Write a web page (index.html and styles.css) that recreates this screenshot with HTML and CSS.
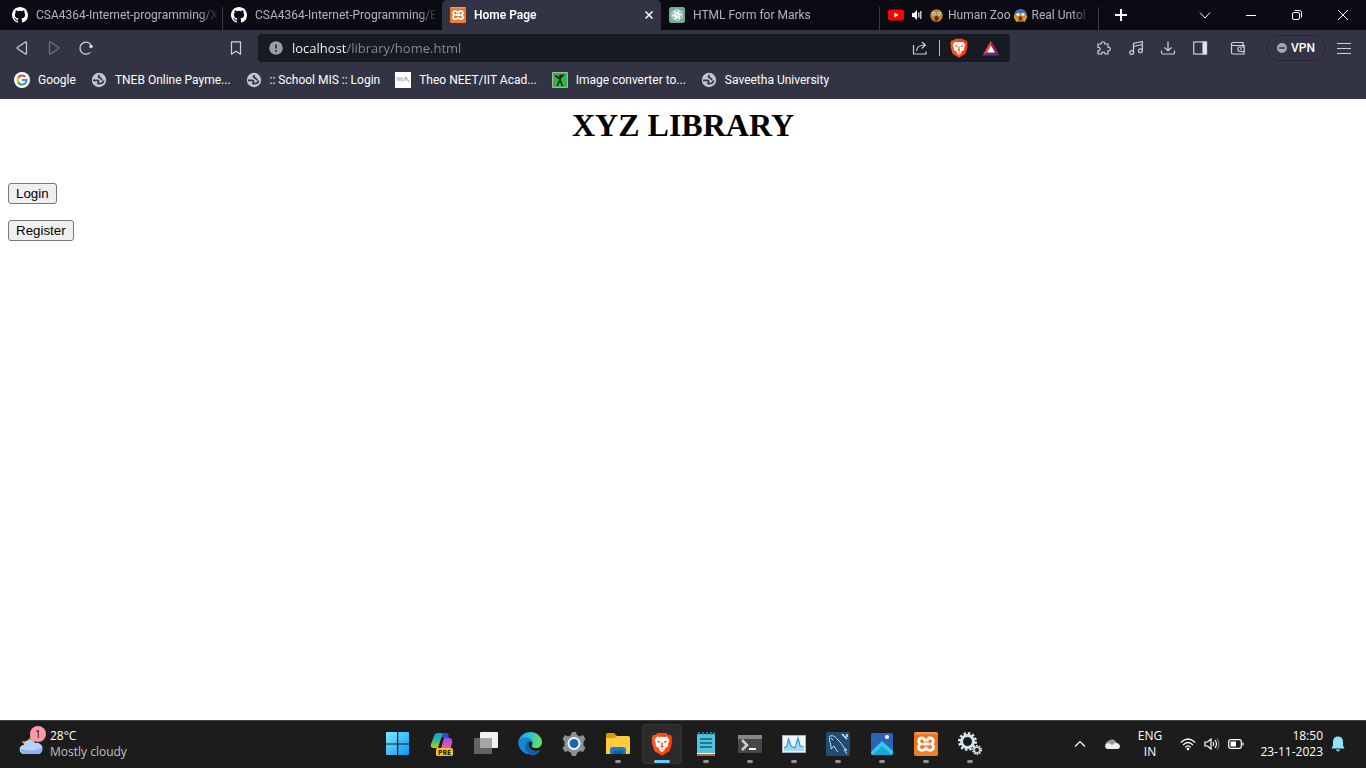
FILE: index.html
```html
<!DOCTYPE html>
<html lang="en">
<head>
<meta charset="utf-8">
<title>Home Page</title>
<link rel="stylesheet" href="styles.css">
</head>
<body>
<svg class="defs" aria-hidden="true">
  <defs>
    <linearGradient id="xo" x1="0" y1="0" x2="0" y2="1"><stop offset="0" stop-color="#f9a566"/><stop offset=".15" stop-color="#ee6d17"/><stop offset="1" stop-color="#f47f2a"/></linearGradient>
    <linearGradient id="win" x1="0" y1="0" x2="1" y2="1"><stop offset="0" stop-color="#7deaff"/><stop offset="1" stop-color="#0a94f5"/></linearGradient>
    <linearGradient id="brv" x1="0" y1="0" x2="1" y2="0"><stop offset="0" stop-color="#ff5a22"/><stop offset="1" stop-color="#ff3a00"/></linearGradient>
    <symbol id="github" viewBox="0 0 16 16"><path fill="#fff" d="M8 0C3.58 0 0 3.58 0 8c0 3.54 2.29 6.53 5.47 7.59.4.07.55-.17.55-.38 0-.19-.01-.82-.01-1.49-2.01.37-2.53-.49-2.69-.94-.09-.23-.48-.94-.82-1.13-.28-.15-.68-.52-.01-.53.63-.01 1.08.58 1.23.82.72 1.21 1.87.87 2.33.66.07-.52.28-.87.51-1.07-1.78-.2-3.64-.89-3.64-3.95 0-.87.31-1.59.82-2.15-.08-.2-.36-1.02.08-2.12 0 0 .67-.21 2.2.82a7.6 7.6 0 0 1 4 0c1.53-1.04 2.2-.82 2.2-.82.44 1.1.16 1.92.08 2.12.51.56.82 1.27.82 2.15 0 3.07-1.87 3.75-3.65 3.95.29.25.54.73.54 1.48 0 1.07-.01 1.93-.01 2.2 0 .21.15.46.55.38A8.01 8.01 0 0 0 16 8c0-4.42-3.58-8-8-8z"/></symbol>
    <symbol id="xampp" viewBox="0 0 24 24"><rect width="24" height="24" rx="2" fill="url(#xo)"/><path d="M8.500 12h7M10.500 9.500C11 7 10 6 8 6S4.700 7.400 4.700 9c0 1.500.8 2.600 2.100 3-1.300.5-2.300 1.600-2.300 3.100 0 1.800 1.300 3.200 3.300 3.200 2.200 0 3.600-1.200 4.200-2.300.6 1.100 2 2.300 4.200 2.300 2 0 3.300-1.400 3.300-3.200 0-1.500-1-2.600-2.300-3.100 1.300-.4 2.100-1.500 2.100-3C19.300 7.400 18 6 16 6s-3 1-2.500 3.500" fill="none" stroke="#fff" stroke-width="2.800" stroke-linejoin="round"/></symbol>
    <symbol id="globe" viewBox="0 0 16 16"><circle cx="8" cy="8" r="7.200" fill="#c3c6cd"/><path d="M2 8.300h4c2 0 2 1.300 1.200 2-.9.700-.3 1.300.3 1.400 3 .2 4.800-1.700 5.200-3.200M8.800 3.400c-1.600.4-1.800 1.900-.3 2.200 1.800.3 1.300 2.200 3 2.400" fill="none" stroke="#323443" stroke-width="1.700"/></symbol>
    <symbol id="brave" viewBox="0 0 22 24"><path fill="url(#brv)" d="M6.500 1h9l1.800 2 2.200-.2L21.500 6l-.7 2 .3 3-2.500 8L11 23.700 3.400 19 .9 11l.3-3-.7-2 2-3.200 2.200.2z"/><path fill="#fff" d="M6 4.500l2.500.6L11 4.700l2.500.4 2.500-.6L18.500 8 17 12l.4 2-3 2-1.200 2.500L11 20.300l-2.200-1.800L7.600 16l-3-2 .4-2L3.500 8z"/><path fill="#fb4515" d="M6 8.800l3.300.6-.6 1.400-2-.5zM16 8.800l-3.300.6.6 1.400 2-.5zM10.200 10.500h1.600l-.2 3.300 1.100 1-1.700 1-1.700-1 1.100-1zM9 17l2 .7 2-.7-2 1.800z"/></symbol>
  </defs>
</svg>
<div class="screen">
  <header class="browser">
    <div class="tabstrip">
      <div class="tabs" role="tablist">
        <button class="tab sep" role="tab"><svg class="fav"><use href="#github"/></svg><span class="title">CSA4364-Internet-programming/X</span></button>
        <button class="tab" role="tab"><svg class="fav"><use href="#github"/></svg><span class="title">CSA4364-Internet-Programming/E</span></button>
        <button class="tab active" role="tab" aria-selected="true"><svg class="fav"><use href="#xampp"/></svg><span class="title">Home Page</span><svg class="tabclose" viewBox="0 0 8 8"><path d="M.5.5l7 7M7.500.5l-7 7"/></svg></button>
        <button class="tab sep" role="tab"><svg class="fav" viewBox="0 0 16 16"><rect width="16" height="16" rx="2.500" fill="#75a99c"/><g fill="none" stroke="#fff" stroke-width=".8"><path id="pt" d="M5.300 9.600V5c0-3 4.300-3.200 5-.6L6.800 6.400v3.300"/><use href="#pt" transform="rotate(60 8 8)"/><use href="#pt" transform="rotate(120 8 8)"/><use href="#pt" transform="rotate(180 8 8)"/><use href="#pt" transform="rotate(240 8 8)"/><use href="#pt" transform="rotate(300 8 8)"/></g></svg><span class="title">HTML Form for Marks</span></button>
        <button class="tab sep media" role="tab">
          <svg class="fav" viewBox="0 0 16 16"><rect y="2.500" width="16" height="11" rx="2.500" fill="#f00"/><path d="M6.300 5.600v4.800l4.200-2.400z" fill="#fff"/></svg>
          <svg class="sound" viewBox="0 0 12 12"><path d="M1 4h2l3-3v10L3 8H1z" fill="#fff"/><path d="M7.800 3.500v5M9.800 2v8" stroke="#fff" stroke-width="1.100"/></svg>
          <span class="title"><svg class="emoji" viewBox="0 0 12 12"><circle cx="6" cy="6" r="5.800" fill="#b58a2a"/><circle cx="3.600" cy="4.200" r="1.700" fill="#e2e0d8"/><circle cx="8.400" cy="4.200" r="1.700" fill="#e2e0d8"/><circle cx="3.700" cy="4.200" r=".7" fill="#432"/><circle cx="8.300" cy="4.200" r=".7" fill="#432"/><ellipse cx="6" cy="8.700" rx="1.900" ry="2.300" fill="#7c1a2b"/></svg> Human Zoo <svg class="emoji" viewBox="0 0 12 12"><circle cx="6" cy="6" r="5.800" fill="#c38b28"/><path d="M.3 5A5.800 5.800 0 0 1 11.700 5Q6 2 .3 5" fill="#3973c4"/><circle cx="3.700" cy="5" r="1.500" fill="#e8e8e8"/><circle cx="8.300" cy="5" r="1.500" fill="#e8e8e8"/><ellipse cx="6" cy="8.800" rx="1.600" ry="2.200" fill="#802038"/><path d="M.5 6.500l2.500 5M11.500 6.500L9 11.500" stroke="#e19a29" stroke-width="2"/></svg> Real Untol</span></button>
      </div>
      <button class="newtab" aria-label="New tab"><svg viewBox="0 0 12 12" width="12" height="12"><path d="M6 0v12M0 6h12" stroke="#fff" stroke-width="2"/></svg></button>
      <div class="winctl">
        <button aria-label="Search tabs"><svg viewBox="0 0 12 12"><path d="M1 3.500l5 5.500 5-5.500"/></svg></button>
        <button aria-label="Minimize"><svg viewBox="0 0 12 12"><path d="M1 6.500h10"/></svg></button>
        <button aria-label="Restore"><svg viewBox="0 0 12 12"><rect x="1.500" y="3.500" width="7" height="7" rx="1.500"/><path d="M3.500 1.500h5a2 2 0 0 1 2 2v5"/></svg></button>
        <button aria-label="Close"><svg viewBox="0 0 12 12"><path d="M1 1l10 10M11 1L1 11"/></svg></button>
      </div>
    </div>
    <div class="toolbar">
      <div class="nav">
        <button aria-label="Back"><svg viewBox="0 0 16 16"><path d="M12.500 2.500v11c0 .6-.6.8-1 .5L3.300 8.500q-.5-.5 0-1L11.500 2q1-.5 1 .5z"/></svg></button>
        <button class="dim" aria-label="Forward"><svg viewBox="0 0 16 16"><path d="M3.500 2.500v11c0 .6.600.8 1 .5l8.200-5.500q.5-.5 0-1L4.500 2q-1-.5-1 .5z"/></svg></button>
        <button aria-label="Reload"><svg viewBox="0 0 16 16"><path d="M12.300 12.300A6 6 0 1 1 13.600 6"/><circle cx="13" cy="6.500" r="1.200" fill="#fff"/></svg></button>
      </div>
      <button class="save" aria-label="Bookmark"><svg viewBox="0 0 16 16"><path d="M3.500 1.800h9v12.400l-4.500-3-4.500 3z"/></svg></button>
      <div class="address">
        <svg class="info" viewBox="0 0 14 14"><circle cx="7" cy="7" r="6.800" fill="#9a9da8"/><path d="M7 3.500v4M7 9v1.800" stroke="#22252e" stroke-width="1.600"/></svg>
        <input class="url" type="text" aria-label="Address" value="localhost/library/home.html">
        <button aria-label="Share"><svg viewBox="0 0 16 16" class="share"><path d="M1.500 5v9h12.500v-2.500M4.500 11c.3-4 2.500-6 8.500-6M9.800 2l3.600 3-3.600 3.500"/></svg></button>
        <span class="bar"></span>
        <button aria-label="Brave Shields"><svg class="lion"><use href="#brave"/></svg></button>
        <button aria-label="Rewards"><svg class="bat" viewBox="0 0 18 16"><path d="M9 .5L.5 15.500 6 12l3-6z" fill="#ff4724"/><path d="M9 .5l8.500 15L12 12 9 6z" fill="#9e1f63"/><path d="M.5 15.500h17L12 12H6z" fill="#662d91"/><path d="M9 5.500L5 12.500h8z" fill="#fff"/></svg></button>
      </div>
      <div class="actions">
        <button aria-label="Extensions"><svg viewBox="0 0 16 16"><path d="M2 4h3.200C4.500 1 9.500 1 8.800 4H12v3.200c3-.7 3 4.300 0 3.600V14H9c.4-2.600-3.800-2.600-3.500 0H2v-3.200c2.700.6 2.700-4 0-3.500z"/></svg></button>
        <button aria-label="Media"><svg viewBox="0 0 16 16"><path d="M5.500 12.500V3.500L14.300 1.500v9M5.500 6.500l8.800-2"/><circle cx="3.700" cy="12.500" r="1.900"/><circle cx="12.400" cy="10.800" r="1.900"/></svg></button>
        <button aria-label="Downloads"><svg viewBox="0 0 16 16"><path d="M8 1.500v9M4.500 7.500L8 10.800l3.500-3.300M1.500 10.500v2q0 1.500 1.500 1.500h10q1.500 0 1.500-1.500v-2"/></svg></button>
        <button aria-label="Sidebar"><svg viewBox="0 0 16 16"><rect x="1.700" y="2" width="12.800" height="12"/><path d="M11 2h3.500v12H11z" fill="#e8e8ee"/></svg></button>
        <button class="wallet" aria-label="Wallet"><svg viewBox="0 0 16 16"><path d="M13 5V2.500H3.500q-2 0-2 1.500v8.500q0 1.500 1.500 1.500h11v-2.500M1.700 5.500h12.500v6H10q-2.200-.3-2.200-2.500T10 7h4.200"/><circle cx="10.800" cy="9.200" r=".3"/></svg></button>
        <button class="vpn"><svg viewBox="0 0 10 10" class="vpnico"><circle cx="5" cy="5" r="5" fill="#a3a6c0"/><path d="M2 5h6" stroke="#323443" stroke-width="1.500"/></svg>VPN</button>
        <button aria-label="Menu"><svg viewBox="0 0 16 16"><path d="M1 3.500h14M1 8.500h14M1 13.500h14"/></svg></button>
      </div>
    </div>
    <nav class="bookmarks" aria-label="Bookmarks">
      <a href="#"><svg class="fav" viewBox="0 0 16 16"><circle cx="8" cy="8" r="8" fill="#fff"/><g fill="none" stroke-width="2"><path stroke="#ea4335" d="M4 6a4.500 4.500 0 0 1 7.300-1.200"/><path stroke="#fbbc05" d="M4 6a4.500 4.500 0 0 0 0 4"/><path stroke="#34a853" d="M4 10a4.500 4.500 0 0 0 7 1.500"/><path stroke="#4285f4" d="M11 11.500A4.500 4.500 0 0 0 12.500 8H8"/></g></svg><span>Google</span></a>
      <a href="#"><svg class="fav"><use href="#globe"/></svg><span>TNEB Online Payme...</span></a>
      <a href="#"><svg class="fav"><use href="#globe"/></svg><span>:: School MIS :: Login</span></a>
      <a href="#"><svg class="fav" viewBox="0 0 16 16"><path d="M0 0h16v16H0z" fill="#fff"/><path d="M1 6h5M2 8h4M7 5v5M9 9l2-4 3 5M9 6h3" stroke="#aaa3ad" fill="none"/><path d="M2 7h4M10 8h4" stroke="#d2b5b9" fill="none"/></svg><span>Theo NEET/IIT Acad...</span></a>
      <a href="#"><svg class="fav" viewBox="0 0 16 16"><path d="M.5.500h15v15H.5z" fill="#35b34a" stroke="#a7b5aa"/><circle cx="8.500" cy="4" r="1.400" fill="#0a2411"/><path d="M3 3.500l4.500 3 4.500-4M8 6v4M7.500 9L5 14M8.500 9l2 5" stroke="#0a2411" stroke-width="1.600" fill="none"/></svg><span>Image converter to...</span></a>
      <a href="#"><svg class="fav"><use href="#globe"/></svg><span>Saveetha University</span></a>
    </nav>
  </header>
  <main class="page">
    <h1>XYZ LIBRARY</h1>
    <button class="pagebtn">Login</button>
    <button class="pagebtn">Register</button>
  </main>
  <footer class="taskbar">
    <button class="weather">
      <span class="wicon"><svg viewBox="0 0 28 28"><path d="M13 4a7 7 0 0 1-9 9c2 6 11 6 14-1z" fill="#f4a51c"/><path d="M7 27a5 5 0 0 1-.5-10 6.500 6.500 0 0 1 12-2A6 6 0 0 1 22 27z" fill="#b9d3f8"/><path d="M3 21q11 5 23-1c0 5-1 7-5 7H7q-4-1-4-5z" fill="#8fb3f0"/></svg><span class="badge">1</span></span>
      <span class="wtext"><span>28°C</span><span class="muted">Mostly cloudy</span></span>
    </button>
    <div class="apps">
      <button aria-label="Start"><svg viewBox="0 0 24 24"><path d="M0 1q0-1 1-1h10v11.500H0zM12.300 0H22q1 0 1 1v10.500H12.300zM0 12.500h11V23H1q-1 0-1-1zM12.300 12.500H23V22q0 1-1 1h-9.700z" fill="url(#win)"/></svg></button>
      <button aria-label="Copilot"><svg viewBox="0 0 24 24"><defs><linearGradient id="cp1" x1="0" y1="0" x2="0" y2="1"><stop offset="0" stop-color="#159bd8"/><stop offset=".5" stop-color="#35b68a"/><stop offset="1" stop-color="#d6c51b"/></linearGradient><linearGradient id="cp2" x1="0" y1="0" x2="0" y2="1"><stop offset="0" stop-color="#a44cf0"/><stop offset=".6" stop-color="#ee5aa0"/><stop offset="1" stop-color="#ff8755"/></linearGradient></defs><path d="M7 1h9q2 0 2.500 3l-5 0q-2 0-3 4L8 16H3q-3-1-2-4l3-8q1-3 3-3z" fill="url(#cp1)"/><path d="M12 1h4q2 0 3 5h-6z" fill="#1757c5"/><path d="M14 6h6q3 1 2 5l-2 8q-1 4-4 4h-5q-2-1-1-3z" fill="url(#cp2)"/><rect x="6" y="16" width="17" height="8" rx="1.500" fill="#ffc20e"/><text x="14.500" y="22.500" class="pre">PRE</text></svg></button>
      <button aria-label="Task view"><svg viewBox="0 0 24 24"><rect x="6" width="18" height="16" rx="1" fill="#f1f1f1"/><rect y="6" width="18" height="16" rx="1" fill="#6c6c6c" fill-opacity=".9"/><path d="M6 6h12v10H6z" fill="#a5a5a5"/></svg></button>
      <button aria-label="Edge"><svg viewBox="0 0 24 24"><defs><linearGradient id="ed" x1="0" y1="0" x2="1" y2=".3"><stop offset="0" stop-color="#1b9de2"/><stop offset=".6" stop-color="#35c5c7"/><stop offset="1" stop-color="#65df5d"/></linearGradient></defs><path d="M.2 11C1 4 6 0 12 0c7 0 12 5 12 10 0 4-3 6-6 6-4 0-5-2-4-3 2-4-2-7-6-7-4 0-7 2-7.800 5z" fill="url(#ed)"/><path d="M.2 11C1 7 4 5.500 7.500 5.500c4 0 7 2 7 5-4-2-7 1-6 5 1 4 5 6 9 5.500A12 12 0 0 1 .2 11z" fill="#1587d8"/><path d="M11 9c-6 2-5 13 4 14.600 4-1 6-3 7.500-5.600-6 2.500-13 0-11.500-9z" fill="#125fae"/></svg></button>
      <button aria-label="Settings"><svg viewBox="0 0 24 24"><path d="M10 0h4l1 3 3 1.500 3-1.500 2.500 4-2 2.500v4l2 2.500-2.500 4-3-1-3 2-1 3h-4l-1-3-3-2-3 1-2.500-4 2-2.500v-4L.5 7 3 3l3 1.500L9 3z" fill="#88919b"/><circle cx="12" cy="11.500" r="6.500" fill="#f4f6f8"/><circle cx="12" cy="11.500" r="4.500" fill="#1767b5"/></svg></button>
      <button class="running" aria-label="File Explorer"><svg viewBox="0 0 24 24"><path d="M0 3q0-2 2-2h6l3 3v6H0z" fill="#d89b0b"/><path d="M0 6h8l3-2h11q2 0 2 2v15q0 1-1 1H0z" fill="#ffcc3f"/><path d="M4 22v-4q0-3 3-3h10q3 0 3 3v4z" fill="#147ccb"/><path d="M7 18.500h10V22H7z" fill="#0c61ad"/></svg></button>
      <button class="running current" aria-label="Brave"><svg><use href="#brave"/></svg></button>
      <button class="running" aria-label="Notepad"><svg viewBox="0 0 24 24"><path d="M3 2h18v20H3z" fill="#53c2df"/><path d="M5 0v3M9 0v3M13 0v3M17 0v3M20 0v3" stroke="#2b91b0" stroke-width="1.500"/><path d="M6 7h12M6 11h12M6 15h12" stroke="#12617e" stroke-width="1.700"/><path d="M3 21h18v1H3z" fill="#fff"/><path d="M3 22h18v2H3z" fill="#bf6725"/></svg></button>
      <button class="running" aria-label="Terminal"><svg viewBox="0 0 24 24"><rect y="3" width="24" height="18" rx="1" fill="#474747"/><path d="M0 3h24v4H0z" fill="#858585"/><path d="M4 8l5 5-5 5" stroke="#d2d2d2" stroke-width="2.500" fill="none"/><path d="M11 17h7" stroke="#fff" stroke-width="2"/></svg></button>
      <button class="running" aria-label="Performance"><svg viewBox="0 0 24 24"><path d="M.5 3.500h23v17H.5z" fill="#f1f5fa" stroke="#aab6c2"/><path d="M2 19v-3l3-2 1-6 2 1 2 6 4 1 2-9 2 3 1 6 3-1v4z" fill="#a3d7fa"/><path d="M2 16l3-2 1.500-7L9 14l4 2 3-10 2 8 4 1" fill="none" stroke="#3096df" stroke-width="1.200"/></svg></button>
      <button class="running" aria-label="MySQL Workbench"><svg viewBox="0 0 24 24"><rect width="24" height="24" rx="2" fill="#1f4d73"/><path d="M5 17c1-3-3-10-1-13 3-1 6 1 8 4 3 3 4 4 6 8l3 2-3 0 3 4M5 17l3-3c1 2 2 4 4 6M5 6l2 2" stroke="#cfe0ec" fill="none"/><path d="M16 2l5 5M21 2v3" stroke="#e5eef4" stroke-width="1.500"/></svg></button>
      <button class="running" aria-label="Photos"><svg viewBox="0 0 24 24"><rect x="1" y="1" width="22" height="22" rx="2" fill="#2d62b9"/><path d="M1 20L12 9l11 10v2q0 2-2 2H3q-2 0-2-2z" fill="#32c8eb"/><path d="M3 23l9-9 9 8-1 1z" fill="#17a7d5"/><circle cx="17" cy="5" r="2" fill="#fff"/></svg></button>
      <button class="running" aria-label="XAMPP"><svg><use href="#xampp"/></svg></button>
      <button class="running" aria-label="Services"><svg viewBox="0 0 24 24"><circle cx="9.500" cy="9.500" r="8" fill="none" stroke="#dfe9f1" stroke-width="3" stroke-dasharray="2.300 1.900"/><circle cx="9.500" cy="9.500" r="6" fill="none" stroke="#cfe2f0" stroke-width="3"/><circle cx="19" cy="18" r="4" fill="none" stroke="#e2ecf4" stroke-width="2" stroke-dasharray="1.500 1"/><circle cx="19" cy="18" r="2.800" fill="none" stroke="#bcd6e8" stroke-width="1.500"/></svg></button>
    </div>
    <div class="tray">
      <button class="chev" aria-label="Hidden icons"><svg viewBox="0 0 12 12"><path d="M1 8.500L6 3.500l5 5"/></svg></button>
      <button class="cloud" aria-label="OneDrive"><svg viewBox="0 0 16 12"><path d="M2 8A4 4 0 0 1 5 2.500 4.500 4.500 0 0 1 12 4l2 2z" fill="#999"/><path d="M3 11a3 3 0 0 1-1-5q2-1 4-.5L8 7l3-2q4-.5 5 3 0 3-3 3z" fill="#eee"/></svg></button>
      <button class="lang"><span>ENG</span><span>IN</span></button>
      <button class="status" aria-label="Network, sound, battery">
        <svg viewBox="0 0 16 16"><path d="M.8 6.500q7.200-7 14.400 0M3 9q5-5 10 0M5.200 11.300q2.800-3 5.600 0"/><circle cx="8" cy="13" r="1.300" fill="#fff" stroke="none"/></svg>
        <svg viewBox="0 0 16 16"><path d="M1 6h2.500L7 3v10L3.500 10H1zM9 6q1.500 2 0 4M11 4q3 4 0 8"/><path d="M13 2.500q4 5.500 0 11" stroke="#777"/></svg>
        <svg viewBox="0 0 16 16"><rect x=".7" y="3.700" width="12.600" height="8.600" rx="2"/><path d="M15 6.500v3"/><path d="M2.500 5.500H8v5H2.500z" fill="#fff" stroke="none"/></svg>
      </button>
      <button class="clock"><span>18:50</span><span>23-11-2023</span></button>
      <button class="bell" aria-label="Notifications"><svg viewBox="0 0 14 16"><path d="M7 .5q4.500 0 5 5v4l1.500 3H.5l1.500-3v-4q.5-5 5-5zM5 13.500h4q-.5 2-2 2t-2-2z" fill="#8fe3fb"/></svg></button>
    </div>
  </footer>
</div>
</body>
</html>
```
FILE: styles.css
```css
* { box-sizing: border-box; }
body { margin: 0; }
.defs { position: absolute; width: 0; height: 0; }
.screen {
  display: flex;
  flex-direction: column;
  min-height: 100vh;
  background: #fff;
}
.browser { font: 12px/16px Roboto, "Noto Sans", sans-serif; color: #fff; }
.taskbar { font: 12px/16px "Open Sans", "Noto Sans", sans-serif; color: #fff; }
.browser button, .taskbar button {
  display: flex;
  align-items: center;
  justify-content: center;
  margin: 0;
  padding: 0;
  border: 0;
  background: none;
  color: inherit;
  font: inherit;
}
svg { display: block; flex: none; }
.fav { width: 16px; height: 16px; }
.browser { background: #323443; }

.tabstrip {
  display: flex;
  height: 30px;
  background: #0b0b14;
}
.tabs {
  display: flex;
  flex: 0 1 1099px;
  min-width: 0;
  padding-left: 4px;
}
.browser .tab {
  flex: 1 1 20%;
  min-width: 0;
  gap: 8px;
  justify-content: flex-start;
  padding: 0 4px 0 8px;
  color: #b4b4b8;
}
.sep {
  background: linear-gradient(#3c3c42, #3c3c42) right bottom / 1px 23px no-repeat !important;
}
.browser .media { padding-right: 8px; gap: 7px; }
.title {
  flex: 1;
  min-width: 0;
  overflow: hidden;
  text-align: left;
  white-space: nowrap;
  mask-image: linear-gradient(to left, transparent, #000 20px);
}
.browser .active {
  padding-right: 8px;
  border-radius: 5px 5px 0 0;
  background: #323443;
  color: #fff;
  font-weight: 600;
}
.tabclose { width: 8px; height: 8px; fill: none; stroke: #fff; stroke-width: 1.5; }
.sound { width: 12px; height: 12px; }
.emoji { display: inline-block; width: 13px; height: 13px; margin-right: 2px; vertical-align: -3px; }
.browser .newtab { width: 44px; }
.winctl { display: flex; margin-left: auto; }
.winctl button { width: 46px; }
.winctl svg { width: 12px; height: 12px; fill: none; stroke: #fff; }

.toolbar {
  display: flex;
  align-items: center;
  height: 36px;
  padding: 0 6px;
}
.toolbar svg { width: 16px; height: 16px; fill: none; stroke: #cfd0d7; stroke-width: 1.2; }
.toolbar svg.info, .toolbar svg.lion, .toolbar svg.bat, .toolbar svg.vpnico { stroke: none; }
.nav { display: flex; }
.toolbar button { width: 32px; height: 28px; }
.toolbar .dim { opacity: .4; }
.toolbar .save { margin-left: 118px; }
.address {
  display: flex;
  flex: 1;
  align-items: center;
  min-width: 0;
  height: 28px;
  margin-left: 6px;
  padding: 0 3px 0 11px;
  border-radius: 4px;
  background: #171a21;
}
.toolbar .info { width: 14px; height: 14px; }
.url {
  flex: 1;
  min-width: 0;
  margin: 0 0 0 9px;
  padding: 0;
  border: 0;
  outline: 0;
  background: linear-gradient(90deg, #fff 55px, #888b93 55px) text;
  color: transparent;
  font: 13px/20px "Open Sans", "Noto Sans", sans-serif;
}
.bar { width: 1px; height: 16px; margin: 0 3px; background: #b6b8bf; }
.toolbar .lion { width: 20px; height: 20px; }
.toolbar .bat { width: 18px; height: 16px; }
.actions { display: flex; align-items: center; margin-left: 78px; }
.toolbar .wallet { margin: 0 12px 0 6px; }
.toolbar .vpn {
  width: 60px;
  height: 26px;
  gap: 4px;
  margin-right: 2px;
  border: 1px solid #242632;
  border-radius: 13px;
  font-weight: 500;
}
.toolbar .vpnico { width: 10px; height: 10px; }

.bookmarks {
  display: flex;
  gap: 15px;
  height: 33px;
  padding: 6px 14px;
}
.bookmarks a {
  display: flex;
  gap: 8px;
  height: 16px;
  color: #fff;
  text-decoration: none;
  white-space: nowrap;
}

.page { flex: 1; padding: 8px; }
.page h1 {
  margin: 0 0 39px;
  color: #000;
  font: bold 32px/37px "Liberation Serif", "Times New Roman", serif;
  text-align: center;
}
.pagebtn {
  display: block;
  margin: 0 0 16px;
  padding: 1px 7px;
  border: 1px solid #767676;
  border-radius: 3px;
  background: #efefef;
  color: #000;
  font-family: "Liberation Sans", Arial, sans-serif;
  line-height: 17px;
}

.taskbar {
  display: grid;
  grid-template-columns: 1fr auto 1fr;
  height: 48px;
  padding-left: 2px;
  background: #1c1c1c;
  box-shadow: inset 0 1px #414141;
}
.taskbar .weather { justify-self: start; gap: 4px; padding-left: 16px; }
.wicon { position: relative; width: 28px; height: 36px; }
.wicon svg { width: 26px; height: 32px; }
.badge {
  position: absolute;
  top: 0;
  right: 0;
  width: 16px;
  height: 16px;
  border-radius: 8px;
  background: #ff99a4;
  color: #111;
  font-size: 11px;
}
.wtext { display: flex; flex-direction: column; text-align: left; }
.muted { color: #c0c0c0; }
.apps { display: flex; align-items: center; }
.apps button { position: relative; width: 40px; height: 40px; margin: 0 2px; border-radius: 4px; }
.apps svg { width: 24px; height: 24px; }
.taskbar .current { background: #2b2b2b; outline: 1px solid #353535; outline-offset: -1px; }
.running::after {
  content: "";
  position: absolute;
  bottom: 1px;
  left: 17px;
  width: 6px;
  height: 3px;
  border-radius: 2px;
  background: #929292;
}
.current::after { left: 12px; width: 16px; background: #60cdff; }
.pre { fill: #111; font: bold 7px "Open Sans", sans-serif; text-anchor: middle; }
.tray { display: flex; justify-self: end; padding-right: 18px; }
.tray svg { fill: none; stroke: #fff; stroke-width: 1.2; }
.tray .chev { width: 32px; }
.chev svg { width: 12px; height: 12px; }
.tray .cloud { width: 32px; }
.cloud svg { width: 16px; height: 12px; stroke: none; }
.lang, .clock { flex-direction: column; }
.tray .lang { width: 44px; }
.tray .status { width: 80px; gap: 8px; }
.status svg { width: 16px; height: 16px; }
.tray .clock { width: 76px; align-items: flex-end; padding-right: 5px; }
.tray .bell { width: 20px; }
.bell svg { width: 14px; height: 16px; stroke: none; }
```
